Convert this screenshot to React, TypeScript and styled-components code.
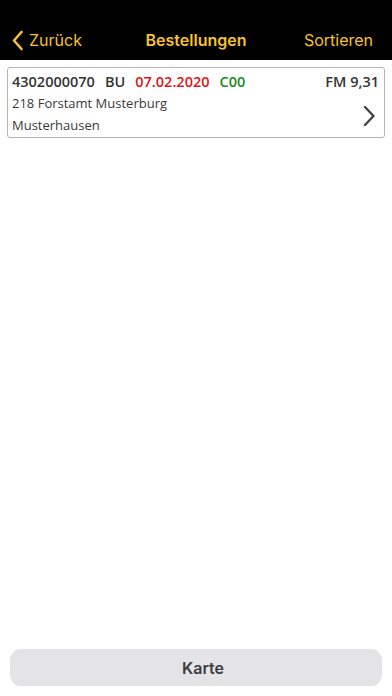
import React from 'react'
import styled, {createGlobalStyle} from 'styled-components'

const Global = createGlobalStyle`
  html, body {
    margin: 0;
    padding: 0;
    background: #fff;
  }
  * {
    box-sizing: border-box;
  }
`
const Screen = styled.div`
  display: flex;
  flex-direction: column;
  width: 392px;
  height: 696px;
  background: #fff;
  overflow: hidden;
`
const NavBar = styled.div`
  height: 60px;
  padding: 20px 19px 0 12px;
  background: #000;
  display: flex;
  align-items: center;
  justify-content: space-between;
  position: relative;
  font-family: Inter, "Liberation Sans", sans-serif;
  color: #f6c230;
  font-size: 16px;
`
const Back = styled.div`
  display: flex;
  align-items: center;
  gap: 6px;
  cursor: pointer;
`
const Title = styled.div`
  position: absolute;
  left: 0;
  right: 0;
  top: 20px;
  bottom: 0;
  display: flex;
  align-items: center;
  justify-content: center;
  font-weight: 600;
  pointer-events: none;
`
const Action = styled.div`
  cursor: pointer;
`
const List = styled.div`
  flex: 1;
  padding: 7px 7px 0 7px;
`
const Card = styled.div`
  border: 1px solid #b5b5b5;
  border-radius: 3px;
  padding: 2px 5px 1px 4px;
  display: flex;
  font-family: "Open Sans", "Liberation Sans", sans-serif;
  font-size: 13px;
  color: #3a3a3a;
`
const Lines = styled.div`
  flex: 1;
  display: flex;
  flex-direction: column;
`
const Line = styled.div`
  height: 22px;
  display: flex;
  align-items: center;
`
const Head = styled(Line)`
  font-weight: 600;
  font-size: 14.5px;
  color: #353535;
`
const Field = styled.span<{$tone?: string}>`
  color: ${p => p.$tone || 'inherit'};
  margin-right: 10px;
`
const Amount = styled.span`
  margin-left: auto;
`
const Row = styled.div`
  display: flex;
  align-items: center;
`
const Chevron = styled.svg`
  margin-left: auto;
  margin-right: 4px;
  margin-top: 3px;
`
const Footer = styled.div`
  padding: 0 10px 10px 10px;
`
const MapButton = styled.button`
  width: 100%;
  height: 37px;
  border: none;
  border-radius: 11px;
  padding: 0 0 0 14px;
  background: #e4e4e6;
  font-family: Inter, "Liberation Sans", sans-serif;
  font-size: 16px;
  font-weight: 600;
  color: #3c3c3e;
  cursor: pointer;
`

const App: React.FC = () => {
    return (
        <Screen>
            <Global/>
            <NavBar>
                <Back>
                    <svg width="11" height="21" viewBox="0 0 11 21">
                        <path d="M9.5 2 L2 10.5 L9.5 19" stroke="#f6c230" strokeWidth="2.6" fill="none"
                              strokeLinecap="round" strokeLinejoin="round"/>
                    </svg>
                    <span>Zurück</span>
                </Back>
                <Title>Bestellungen</Title>
                <Action>Sortieren</Action>
            </NavBar>
            <List>
                <Card>
                    <Lines>
                        <Head>
                            <Field>4302000070</Field>
                            <Field>BU</Field>
                            <Field $tone="#e0161b">07.02.2020</Field>
                            <Field $tone="#1b8a1b">C00</Field>
                            <Amount>FM 9,31</Amount>
                        </Head>
                        <Row>
                            <Lines>
                                <Line>218 Forstamt Musterburg</Line>
                                <Line>Musterhausen</Line>
                            </Lines>
                            <Chevron width="12" height="22" viewBox="0 0 12 22">
                                <path d="M2 2 L10.5 11 L2 20" stroke="#444" strokeWidth="2.4" fill="none"
                                      strokeLinecap="round" strokeLinejoin="round"/>
                            </Chevron>
                        </Row>
                    </Lines>
                </Card>
            </List>
            <Footer>
                <MapButton>Karte</MapButton>
            </Footer>
        </Screen>
    )
}
export default App
